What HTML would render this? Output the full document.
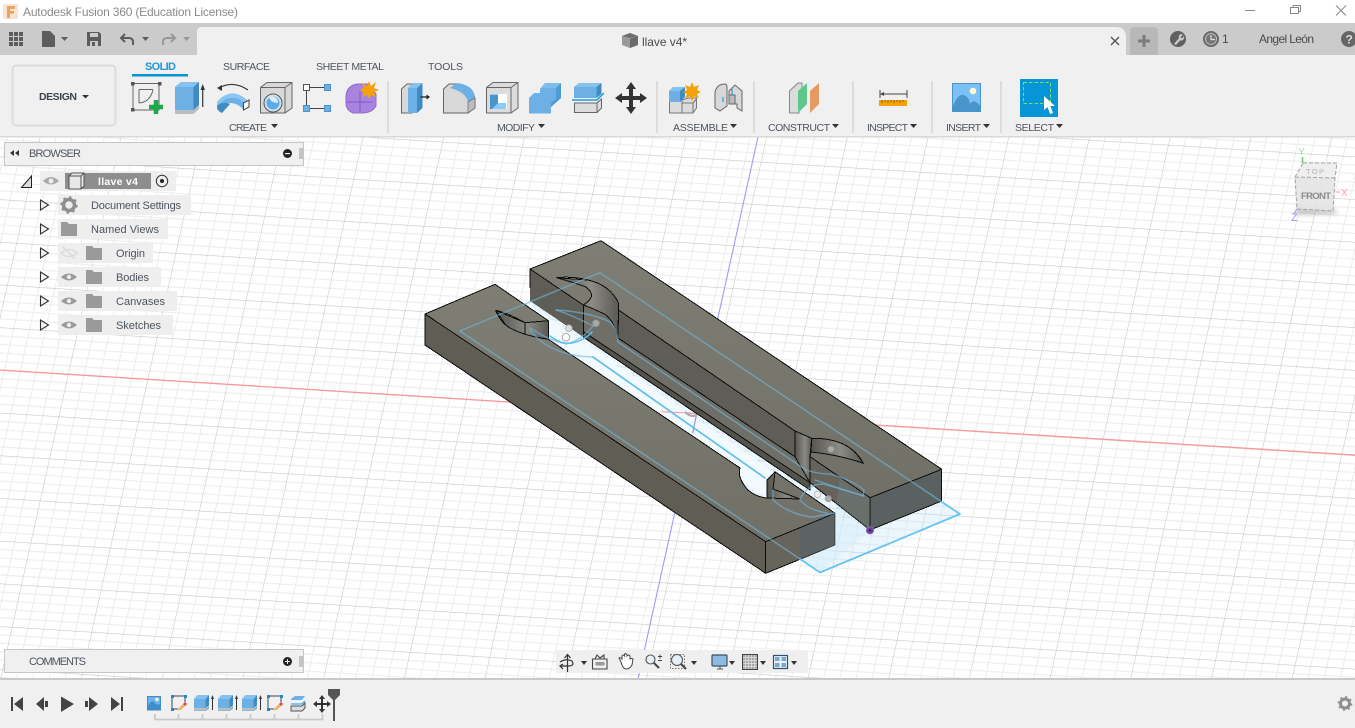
<!DOCTYPE html>
<html><head><meta charset="utf-8"><title>Autodesk Fusion 360</title>
<style>
html,body{margin:0;padding:0;background:#fff;width:1355px;height:728px;overflow:hidden}
svg{position:absolute;left:0;top:0;display:block}
text{font-family:"Liberation Sans",sans-serif;font-size:11px;fill:#4a4a4a}
.lb{font-size:10.5px;fill:#4d5560}
.br{font-size:11px;fill:#4d5560}
</style></head><body>
<svg width="1355" height="728" viewBox="0 0 1355 728" xmlns="http://www.w3.org/2000/svg">
<defs>
<pattern id="grid" patternUnits="userSpaceOnUse" width="79.6" height="42.1" patternTransform="matrix(1,0.063,-0.222,1,68,374.3)">
<g stroke="#ececec" stroke-width="1" fill="none">
<path d="M15.92,0V42.1M31.84,0V42.1M47.76,0V42.1M63.68,0V42.1M0,8.42H79.6M0,16.84H79.6M0,25.26H79.6M0,33.68H79.6"/>
</g>
<g stroke="#c6c6c6" stroke-width="1.1" fill="none"><path d="M0,0V42.1M0,0H79.6"/></g>
</pattern>
<linearGradient id="top" x1="0" y1="0" x2="0" y2="1"><stop offset="0" stop-color="#7f7e74"/><stop offset="1" stop-color="#717067"/></linearGradient>
<linearGradient id="wall" x1="0" y1="0" x2="1" y2="0"><stop offset="0" stop-color="#55544e"/><stop offset=".55" stop-color="#8d8d86"/><stop offset="1" stop-color="#5a5952"/></linearGradient>
<linearGradient id="wall2" x1="0" y1="0" x2="1" y2="0"><stop offset="0" stop-color="#55544e"/><stop offset=".6" stop-color="#8a8a83"/><stop offset="1" stop-color="#5a5952"/></linearGradient>
<filter id="soft" x="-30%" y="-100%" width="160%" height="300%"><feGaussianBlur stdDeviation="2.5"/></filter>
<g id="ext">
<path d="M0,4L3.500,0H15V13L11.500,16H0Z" fill="#6cb0e6"/><path d="M11.500,4L15,0V13L11.500,16Z" fill="#3f8cc4"/><path d="M0,4L3.500,0H15L11.500,4Z" fill="#86c2f0"/><path d="M0,13H11.500L15,10V12L11.500,15.500H0Z" fill="#bdbdbd"/>
<path d="M18.500,15V2" stroke="#333" fill="none"/><path d="M17,4L18.500,0L20,4Z" fill="#333"/>
</g>
<g id="ske">
<path d="M1,1H14M1,1V14M1,14H7M14,1V7" stroke="#444" fill="none"/><rect x="0" y="0" width="3" height="3" fill="#1e87d6"/><rect x="13" y="0" width="3" height="3" fill="#1e87d6"/><rect x="0" y="13" width="3" height="3" fill="#1e87d6"/>
<path d="M8,13L12,9L14,11L10,15L7,15.500Z" fill="#e8b26a"/><path d="M12,9L14,7L16,9L14,11Z" fill="#e04040"/>
</g>
</defs>

<!-- viewport -->
<rect x="0" y="137" width="1355" height="543" fill="#fff"/>
<rect x="0" y="137" width="1355" height="543" fill="url(#grid)"/>
<path d="M0,370L1355,455" stroke="#ff9494" stroke-width="1.2"/>
<path d="M758,137L638,679" stroke="#9d9df2" stroke-width="1.1"/>

<!-- sketch plane floor -->
<path d="M460,331L600,272.700L960,514L820,572.500Z" fill="#bfe4fa" fill-opacity=".3"/>
<path d="M527,303L800,490L770,500L545,345Z" fill="#f3fafe" fill-opacity=".85"/>
<path d="M661.700,411.700L696.700,413.300L692.700,433" fill="none" stroke="#ff9494"/>
<path d="M696.700,413.300L692.700,433" stroke="#8d8df0" fill="none"/>
<path d="M685,412Q691,418 697,415" fill="none" stroke="#aaa" stroke-width="2"/>

<!-- solids -->
<g shape-rendering="crispEdges" stroke="#0c0c0c" stroke-width="1" stroke-linejoin="round">
<!-- right block -->
<path d="M530,269L583.300,305L583.300,337L530,301Z" fill="#5f5e56" stroke="none"/>
<path d="M530,269V288" fill="none"/>
<path d="M583.300,305L810,456.700V490L583.300,337Z" fill="#54534c"/>
<path d="M583.300,305L591.700,308L610,313L618,338L795,456.700L810,467V482.700L583.300,331.700Z" fill="#706f67"/>
<path d="M618.500,310L795,431L795,456.700L618,338Z" fill="#5f5e56"/>
<path d="M556.700,277.700L588,280Q610,285 618.500,303L618,338Q613,316 600,312Q592,308 583.300,305L586,287Z" fill="url(#wall)"/>
<path d="M795,431L811.700,438.300L810,456.700V482.700L795,456.700Z" fill="url(#wall2)"/>
<path d="M811.700,438.300Q847,436 863.300,463.300L811,452Z" fill="url(#wall)"/>
<path d="M810,456.700L870,497.700V530L810,482.700Z" fill="#65635b"/>
<path d="M870,497.700L941.700,469.300V501L870,530Z" fill="#5a6261"/>
<path d="M530,269L601,240.700L941.700,469.300L870,497.700L810,456.700L811,452Q840,455 863.300,463.300Q850,438 811.700,438.300L795,431L618.500,310V303Q610,285 588,280Q572,276 556.700,277.700Q575,283 586,287Q592,292 591.700,296Q590,301 583.300,305Z" fill="url(#top)"/>
<path d="M583.300,305V331.700" fill="none"/>
<!-- left block -->
<path d="M425,314L765.700,541.700V573.300L425,345Z" fill="#5f5d54"/>
<path d="M765.700,541.700L835,513.300V545L765.700,573.300Z" fill="#67645b"/>
<path d="M495.700,310.300L525,322.700L548.300,320.700V339.300L525.300,335L506.700,326.700Z" fill="url(#wall2)"/>
<path d="M525,322.700V335" fill="none"/>
<path d="M767,480L775,471.700L773,489L800,499L767,498Z" fill="url(#wall2)"/>
<path d="M425,314L495,284.300L548.300,320.700L525,322.700Q508,313 495.700,310.300Q500,322 510,328Q525,336 548.300,339.300L740,468Q737,478 748,490Q756,497 767,498L800,499L773,489L775,471.700L835,513.300L765.700,541.700Z" fill="url(#top)"/>
</g>
<!-- tinted zones -->
<path d="M800,529L835,513.300V545L800,559.500Z" fill="#55616a" fill-opacity=".55"/>
<path d="M835,513.300L870,530L870,498L840,477Z" fill="#8fc3dc" fill-opacity=".12"/>
<path d="M835,514L870,531L820,572L800,560L835,545Z" fill="#d6eefb" fill-opacity=".5"/>

<!-- sketch lines -->
<g fill="none" stroke-linecap="round" stroke-linejoin="round">
<g stroke="#6fb4dc" stroke-opacity=".66" stroke-width="1.4">
<path d="M460,331L600,272.700L942,502"/>
<path d="M460,331L800,559"/>
<path d="M618,342L806,470Q818,474 830,474Q852,480 864,490L863,496L815,480"/>
<path d="M530,330Q550,356 593,357"/>
<path d="M530,328Q548,340 566,344Q582,340 593,326"/>
<path d="M556,310Q590,312 610,322Q618,330 618,342"/>
<path d="M556,310Q572,315 593,326"/>
<path d="M773,490V500Q790,515 813,517L835,513"/>
<path d="M800,499Q808,484 823,484L864,496"/>
<path d="M800,500Q808,510 827,513"/>
</g>
<path d="M593,357L765,478" stroke="#62bfec" stroke-width="1.7"/>
<path d="M550,336Q562,345 572,343Q585,340 592,332" stroke="#62bfec" stroke-width="1.5"/>
<path d="M942,502L960,514L820,572.500L800,559" stroke="#66c4f0" stroke-width="1.8"/>
</g>
<g>
<circle cx="568.700" cy="328.300" r="3.300" fill="#ddd" stroke="#bbb"/>
<circle cx="566" cy="337.300" r="3.800" fill="#fff" stroke="#aaa"/>
<circle cx="596" cy="323.300" r="3.200" fill="#aaa" stroke="#999"/>
<circle cx="817.700" cy="494.300" r="3.300" fill="#eee" stroke="#bbb"/>
<circle cx="828.300" cy="498.700" r="3" fill="#aaa" stroke="#999"/>
<circle cx="831" cy="449.300" r="3" fill="#aaa" stroke="#999"/>
<circle cx="870" cy="530.300" r="3.600" fill="#6a3fa0" stroke="#8a68b8"/>
<circle cx="870" cy="530.300" r="1" fill="#222"/>
</g>

<!-- view cube -->
<path d="M1297,207L1334,209L1338,214L1296,215Z" fill="#999" opacity=".55" filter="url(#soft)"/>
<path d="M1303,163H1337L1335,178L1295,177Z" fill="#ececec" fill-opacity=".85"/>
<path d="M1295,177L1335,178L1333,211L1297,209Z" fill="#e3e3e3" fill-opacity=".85"/>
<path d="M1303,163H1337L1335,178L1333,211L1297,209L1295,177Z M1295,177L1335,178" fill="none" stroke="#a2a2a2" stroke-dasharray="4 2"/>
<text x="1306" y="174" style="font-size:7.500px;fill:#b4b4b4" textLength="18">TOP</text>
<text x="1301" y="199" style="font-size:9.500px;font-weight:bold;fill:#8c8c8c" textLength="30">FRONT</text>
<text x="1298" y="155" style="font-size:10px;fill:#8fe59a">Y</text>
<path d="M1302.500,157V163" stroke="#5ed06a" stroke-width="1.500"/>
<path d="M1336,192H1340" stroke="#ff9a9a"/>
<text x="1341" y="196" style="font-size:10px;fill:#ff9a9a">X</text>
<text x="1291" y="221" style="font-size:11px;fill:#9a9af5">Z</text>
<path d="M1297,209L1294,214" stroke="#9a9af5"/>

<!-- title bar -->
<rect x="0" y="0" width="1355" height="23" fill="#fff"/>
<rect x="3" y="4" width="15" height="15" rx="1" fill="#f8e4d2"/>
<path d="M7,6H15V9H10V11H14V13.500H10V18H7Z" fill="#eda160"/>
<text x="23" y="16" style="font-size:12px;fill:#8a8a8a" textLength="215">Autodesk Fusion 360 (Education License)</text>
<path d="M1245,10.500H1255" stroke="#888"/>
<path d="M1290.500,12.500H1298.500V18.500H1290.500ZM1293,12.500V10.500H1300.500V16.500H1298.500" fill="none" stroke="#888" transform="translate(0,-5)"/>
<path d="M1336,5.500L1346,15.500M1346,5.500L1336,15.500" stroke="#888"/>

<!-- header row -->
<rect x="0" y="23" width="1355" height="32" fill="#cbcbcb"/>
<path d="M197,55V32Q197,27 202,27H1116Q1125,27 1126,36V55Z" fill="#f0f0f0"/>
<g fill="#5d5d5d">
<rect x="9" y="32" width="4" height="4"/><rect x="14" y="32" width="4" height="4"/><rect x="19" y="32" width="4" height="4"/>
<rect x="9" y="37" width="4" height="4"/><rect x="14" y="37" width="4" height="4"/><rect x="19" y="37" width="4" height="4"/>
<rect x="9" y="42" width="4" height="4"/><rect x="14" y="42" width="4" height="4"/><rect x="19" y="42" width="4" height="4"/>
<path d="M42,31H50L55,36V47H42Z"/>
<path d="M61,37H68L64.500,41Z"/>
<path d="M87,32H99L101,34V46H87Z"/>
<path d="M142,37H149L145.500,41Z"/>
</g>
<rect x="90" y="33" width="8" height="4" fill="#cbcbcb"/><rect x="90" y="41" width="8" height="5" fill="#cbcbcb"/><rect x="92" y="42" width="3" height="4" fill="#5d5d5d"/>
<path d="M122,38H129Q133,38 133,42V45M125,34L121,38L125,42" fill="none" stroke="#5d5d5d" stroke-width="2"/>
<path d="M174,38H167Q163,38 163,42V45M171,34L175,38L171,42" fill="none" stroke="#989898" stroke-width="2"/>
<path d="M183,37H190L186.500,41Z" fill="#989898"/>
<path d="M622,36L630,33L638,36V45L630,48L622,45Z" fill="#9a9a9a"/>
<path d="M622,36L630,33L638,36L630,38Z" fill="#6f6f6f"/><path d="M630,39L638,36V45L630,48Z" fill="#6a6a6a"/>
<text x="642" y="46" style="font-size:12px;fill:#4a4a4a" textLength="45">llave v4*</text>
<path d="M1111,37L1119,45M1119,37L1111,45" stroke="#555" stroke-width="1.400"/>
<path d="M1130,32Q1130,27 1135,27H1153Q1158,27 1158,32V55H1130Z" fill="#b8b8b8"/>
<path d="M1144,35V47M1138,41H1150" stroke="#7c7c7c" stroke-width="3"/>
<circle cx="1178" cy="39" r="8" fill="#606060"/>
<path d="M1174,44L1179,38Q1178,35 1181,34L1183,34.500L1180.500,37L1182,38.500L1184,36Q1185,39 1182,40.500L1180,40.500L1176,45Z" fill="#cbcbcb"/>
<circle cx="1211" cy="39" r="7.500" fill="#6a6a6a" stroke="#6a6a6a"/>
<circle cx="1211" cy="39" r="5.500" fill="#777" stroke="#cbcbcb" stroke-width=".8"/>
<path d="M1211,35V39.500H1215" fill="none" stroke="#ddd" stroke-width="1.200"/>
<text x="1222" y="43" style="font-size:12px;fill:#4a4a4a">1</text>
<text x="1259" y="43" style="font-size:12px;fill:#4a4a4a" textLength="55">Angel León</text>
<circle cx="1349" cy="39" r="8" fill="#666"/>
<text x="1345.500" y="43.500" style="font-size:12px;font-weight:bold;fill:#ddd">?</text>

<!-- toolbar -->
<rect x="0" y="55" width="1355" height="81" fill="#f0f0f0"/>
<rect x="197" y="50" width="928" height="6" fill="#f0f0f0"/>
<rect x="0" y="136" width="1355" height="1.500" fill="#d8d8d8"/>
<rect x="12.500" y="65.500" width="103" height="60" rx="4" fill="#f0f0f0" stroke="#dcdcdc" stroke-width="2"/>
<text x="39" y="100" style="font-size:10.500px;font-weight:bold;fill:#3c4650" textLength="38">DESIGN</text>
<path d="M82,95H89L85.500,98.500Z" fill="#333"/>
<text x="145" y="70" style="font-size:11px;font-weight:bold;fill:#1e97dd" textLength="31">SOLID</text>
<rect x="132" y="74" width="56" height="2.500" fill="#0696d7"/>
<text x="223" y="70" class="lb" textLength="47">SURFACE</text>
<text x="316" y="70" class="lb" textLength="68">SHEET METAL</text>
<text x="428" y="70" class="lb" textLength="35">TOOLS</text>
<g fill="#dcdcdc">
<rect x="387" y="81" width="2" height="52"/><rect x="656" y="81" width="2" height="52"/><rect x="753" y="81" width="2" height="52"/><rect x="852" y="81" width="2" height="52"/><rect x="931" y="81" width="2" height="52"/><rect x="1000" y="81" width="2" height="52"/>
</g>
<text x="229" y="131" class="lb" textLength="38">CREATE</text><path d="M271,124H278L274.500,128Z" fill="#333"/>
<text x="497" y="131" class="lb" textLength="38">MODIFY</text><path d="M538,124H545L541.500,128Z" fill="#333"/>
<text x="673" y="131" class="lb" textLength="55">ASSEMBLE</text><path d="M730,124H737L733.500,128Z" fill="#333"/>
<text x="768" y="131" class="lb" textLength="62">CONSTRUCT</text><path d="M832,124H839L835.500,128Z" fill="#333"/>
<text x="867" y="131" class="lb" textLength="41">INSPECT</text><path d="M910,124H917L913.500,128Z" fill="#333"/>
<text x="946" y="131" class="lb" textLength="35">INSERT</text><path d="M983,124H990L986.500,128Z" fill="#333"/>
<text x="1015" y="131" class="lb" textLength="39">SELECT</text><path d="M1056,124H1063L1059.500,128Z" fill="#333"/>

<!-- sketch -->
<path d="M133,83.500H159V110H133Z" fill="none" stroke="#666"/>
<g fill="#555"><rect x="131" y="82" width="3.500" height="3.500"/><rect x="158" y="82" width="3.500" height="3.500"/><rect x="131" y="108" width="3.500" height="3.500"/></g>
<path d="M139,89.500H153M139,89.500V103M139,103Q150,102 153,90" fill="none" stroke="#666"/>
<path d="M156,100V114M149,107H163" stroke="#1fa84a" stroke-width="4.500"/>
<!-- extrude -->
<path d="M175,87L181,82H199V105L193.500,110H175Z" fill="#6cb0e6"/><path d="M193.500,87L199,82V105L193.500,110Z" fill="#3f8cc4"/><path d="M175,87L181,82H199L193.500,87Z" fill="#86c2f0"/>
<path d="M175,110H193.500L199,105V109L193.500,114H175Z" fill="#bdbdbd"/>
<path d="M202.700,107V88" stroke="#333" stroke-width="1.200"/><path d="M200.500,90L202.700,84L205,90Z" fill="#333"/>
<!-- revolve -->
<path d="M219,88Q233,80 248,90" fill="none" stroke="#333" stroke-width="1.200"/><path d="M217,88L222,85L222,91Z" fill="#333"/>
<path d="M217,102Q232,85 249,102L244,110Q231,96 217,110Z" fill="#6cb0e6"/>
<path d="M217,102Q232,85 249,102L246.500,105Q232,90 217,106Z" fill="#8ac6f3"/>
<path d="M217,106Q217,111 222,113L230,104Q222,101 217,106Z" fill="#3f8cc4"/>
<path d="M243.500,103L249,100V107L243.500,110Z" fill="#fff" stroke="#444"/>
<!-- hole -->
<path d="M260.500,87.500L267,82.500H292V108L285,113H260.500Z" fill="#d8d8d8" stroke="#666"/><path d="M260.500,87.500H285V113M285,87.500L292,82.500" fill="none" stroke="#666"/>
<circle cx="273" cy="103" r="9" fill="#cfe2f0" stroke="#555"/><circle cx="273" cy="103" r="6.500" fill="#5eaae4"/><path d="M269,97.500Q271,103 278,103Q278,97 272,96.500Z" fill="#dcebf5"/>
<!-- pattern -->
<path d="M310,87.500H324M306.500,91V105M310,108.500H324" stroke="#444"/>
<rect x="303.500" y="84.500" width="6" height="6" fill="#fff" stroke="#555"/><rect x="324.500" y="84.500" width="6" height="6" fill="#6cb0e6" stroke="#4d93c8"/><rect x="303.500" y="105.500" width="6" height="6" fill="#6cb0e6" stroke="#4d93c8"/><rect x="324.500" y="105.500" width="6" height="6" fill="#6cb0e6" stroke="#4d93c8"/>
<!-- form -->
<path d="M346,96Q347,85 358,84H368L376,94V106Q372,113 362,113H353Q346,110 346,103Z" fill="#a884e0" stroke="#8f6ac8"/>
<path d="M347,102H373M360,90V112" stroke="#8459c4"/>
<path d="M369,81L371,86L376,82L374,88L379,90L374,92L376,97L371,95L369,99L367,95L362,97L364,92L359,90L364,88L362,83L367,86Z" fill="#f5a20a"/>
<!-- press pull -->
<path d="M401.500,113V89L407,84H412V113Z" fill="#d8d8d8" stroke="#666"/>
<path d="M408,88L413,83H422V108L417,113H408Z" fill="#6cb0e6"/><path d="M417,88L422.500,83V108L417,113Z" fill="#3f8cc4"/><path d="M408,88L413,83H422.500L417,88Z" fill="#86c2f0"/>
<path d="M420.500,97H428" stroke="#222" stroke-width="1.300"/><path d="M426.500,94.500L430,97L426.500,99.500Z" fill="#222"/>
<!-- fillet -->
<path d="M443.500,113V89L449,84H456Q474,86 475,100V108L468,113Z" fill="#d8d8d8" stroke="#666"/>
<path d="M457,83Q474,85 475,98L468,102Q466,92 450,88Z" fill="#6cb0e6"/>
<path d="M468,102V113L475,108V98Z" fill="#bcbcbc" stroke="#666" stroke-width=".7"/>
<!-- shell -->
<path d="M486.500,87.500L493,82.500H518V108L511,113H486.500Z" fill="#dcdcdc" stroke="#666"/><path d="M486.500,87.500H511V113M511,87.500L518,82.500" fill="none" stroke="#666"/>
<rect x="490" y="94" width="17" height="15" fill="#fff"/>
<path d="M490,94.500H498V103H506V109H490Z" fill="#4a94cc"/><path d="M498,103H506V109H492Z" fill="#8ccbf5"/>
<!-- combine -->
<path d="M529,98L534,93H540V89L545,83H561V98L551,107V113.500H529Z" fill="#6cb0e6"/>
<path d="M540,89L545,83H561L556,88H541Z" fill="#7fbdee"/>
<path d="M556,88L561,83V98L551,107V103L556,99Z" fill="#4f9bd4"/>
<!-- split -->
<path d="M574,87L579,83H601.500V94L596.500,98H574Z" fill="#6cb0e6"/><path d="M574,87L579,83H601.500L596.500,87Z" fill="#86c2f0"/><path d="M596.500,87L601.500,83V94L596.500,98Z" fill="#3f8cc4"/>
<path d="M572,100H597L604,93" fill="none" stroke="#1b9be4" stroke-width="1.500"/>
<path d="M574.500,103H597L601.500,99V108L597,112.500H574.500Z" fill="#dcdcdc" stroke="#666"/><path d="M597,103V112.500" stroke="#666"/>
<!-- move -->
<path d="M631,82L636,89H633V96H640V93L647,98L640,103V100H633V107H636L631,114L626,107H629V100H622V103L615,98L622,93V96H629V89H626Z" fill="#333"/>
<!-- assemble -->
<path d="M669.500,99H682V113H669.500ZM682,100L688,98H696.500V108L693,113H682Z" fill="#dcdcdc" stroke="#777"/><path d="M682,103H693V113M693,103L696.500,99" fill="none" stroke="#777"/>
<path d="M669,91L673,87H685V97L680,102H669Z" fill="#6cb0e6"/><path d="M669,91L673,87H685L680,91Z" fill="#86c2f0"/><path d="M680,91L685,87V97L680,102Z" fill="#3f8cc4"/>
<path d="M692,82L694,87L699,85L697,90L701,92L697,94L699,98L694,96.500L692,101L690,96.500L685,98L687,94L683,92L687,90L685,85L690,87Z" fill="#f5a20a"/>
<path d="M715,92Q717,84 725,84Q727,84 727,88V106L720,111L715,108Z" fill="#d8d8d8" stroke="#666"/>
<path d="M729,91L735,85L742,91V111L737,108V104H729Z" fill="#d8d8d8" stroke="#666"/>
<path d="M729,95H735V104H729Z" fill="#bbb" stroke="#666"/>
<path d="M723,97V102M732,89V95" stroke="#1b9be4" stroke-width="1.200"/>
<!-- construct -->
<path d="M789.500,113V91L798,83H802V91H799V113Z" fill="#dcdcdc" stroke="#888"/>
<path d="M798,91L807,83V104L798,113Z" fill="#5cc98a"/>
<path d="M810,91L819,83V104L810,113Z" fill="#e49a62"/>
<!-- inspect -->
<path d="M880,90V98M880,94H907" stroke="#444"/>
<path d="M880,94L884,92V96Z" fill="#444"/>
<path d="M884,94H907M907,90V98" stroke="#444"/>
<rect x="879" y="100" width="28" height="6" fill="#f5a20a"/>
<path d="M882,100V103M885,100V102M888,100V103M891,100V102M894,100V103M897,100V102M900,100V103M903,100V102" stroke="#7a5000" stroke-width=".8"/>
<!-- insert -->
<rect x="952.500" y="83.500" width="28" height="28" fill="#7cc1f5" stroke="#4a94cc"/>
<path d="M953,106Q958,94 963,95Q969,96 970,104Q974,98 980,106V111H953Z" fill="#4a94cc"/>
<circle cx="973" cy="91" r="3.300" fill="#fff8d0"/>
<!-- select -->
<rect x="1020" y="79" width="38" height="38" fill="#0696d7"/>
<rect x="1023.500" y="82.500" width="27" height="21" fill="none" stroke="#7fe060" stroke-dasharray="3.500 2"/>
<path d="M1044,96L1044,110L1047.500,107L1050,114L1053,113L1050.500,106L1055,106Z" fill="#fff"/>

<!-- browser -->
<rect x="4.500" y="142.500" width="299" height="23" fill="#f0f0f0" stroke="#c6c6c6"/>
<path d="M10,153L14,150V156ZM15,153L19,150V156Z" fill="#333"/>
<text x="29" y="157" class="br" textLength="52">BROWSER</text>
<circle cx="287.500" cy="153.500" r="4.500" fill="#222"/><rect x="285" y="153" width="5" height="1.200" fill="#eee"/>
<path d="M300,148V159M302,148V159" stroke="#999"/>
<path d="M21.500,187.500L31.500,176V187.500Z" fill="#ddd" stroke="#222"/>
<rect x="40" y="171" width="136" height="20" fill="#eeeeee"/>
<path d="M43,181Q51,173 59,181Q51,188 43,181Z" fill="#aaa"/><circle cx="51" cy="181" r="2.500" fill="#eee"/>
<rect x="65" y="173" width="86" height="16" fill="#8e8e8e"/>
<path d="M69,176L72,173H84V186L81,189H69Z" fill="#e8e8e8" stroke="#555"/><path d="M69,176H81V189M81,176L84,173" fill="none" stroke="#555"/>
<text x="98" y="185" style="font-size:10.500px;font-weight:bold;fill:#fff" textLength="40">llave v4</text>
<circle cx="162" cy="181" r="5.700" fill="#eee" stroke="#333"/><circle cx="162" cy="181" r="2" fill="#222"/>

<g fill="#eeeeee">
<rect x="58" y="195" width="133" height="20"/><rect x="58" y="219" width="110" height="20"/><rect x="58" y="243" width="95" height="20"/><rect x="58" y="267" width="103" height="20"/><rect x="58" y="291" width="119" height="20"/><rect x="58" y="315" width="115" height="20"/>
</g>
<g fill="#f2f2f2" stroke="#333" stroke-width="1.100">
<path d="M40.500,200V210L48.500,205Z"/><path d="M40.500,224V234L48.500,229Z"/><path d="M40.500,248V258L48.500,253Z"/><path d="M40.500,272V282L48.500,277Z"/><path d="M40.500,296V306L48.500,301Z"/><path d="M40.500,320V330L48.500,325Z"/>
</g>
<circle cx="69" cy="205" r="5.500" fill="none" stroke="#8e8e8e" stroke-width="3.500"/>
<circle cx="69" cy="205" r="7.700" fill="none" stroke="#8e8e8e" stroke-width="2" stroke-dasharray="2.500 3.500"/>
<g fill="#9a9a9a">
<path d="M61,222H67L69,224H77V236H61Z"/>
<path d="M86,246H92L94,248H102V260H86Z"/><path d="M86,270H92L94,272H102V284H86Z"/><path d="M86,294H92L94,296H102V308H86Z"/><path d="M86,318H92L94,320H102V332H86Z"/>
<path d="M61,277Q69,270 77,277Q69,284 61,277Z"/><path d="M61,301Q69,294 77,301Q69,308 61,301Z"/><path d="M61,325Q69,318 77,325Q69,332 61,325Z"/>
</g>
<g fill="#eee"><circle cx="69" cy="277" r="2.200"/><circle cx="69" cy="301" r="2.200"/><circle cx="69" cy="325" r="2.200"/></g>
<path d="M61,253Q69,246 77,253Q69,260 61,253ZM63,247L75,259" fill="none" stroke="#dcdcdc" stroke-width="1.500"/>
<text x="91" y="209" class="br" textLength="90">Document Settings</text>
<text x="91" y="233" class="br" textLength="68">Named Views</text>
<text x="116" y="257" class="br" textLength="29">Origin</text>
<text x="116" y="281" class="br" textLength="33">Bodies</text>
<text x="116" y="305" class="br" textLength="49">Canvases</text>
<text x="116" y="329" class="br" textLength="45">Sketches</text>

<!-- comments -->
<rect x="4.500" y="649.500" width="299" height="23" fill="#f0f0f0" stroke="#c6c6c6"/>
<text x="29" y="665" class="br" textLength="57">COMMENTS</text>
<circle cx="287.500" cy="661.500" r="4.500" fill="#222"/><path d="M285,661.500H290M287.500,659V664" stroke="#eee"/>
<path d="M300,656V667M302,656V667" stroke="#999"/>

<!-- nav bar -->
<rect x="556" y="650" width="252" height="23" fill="#efefef"/>
<g fill="#333">
<path d="M581,661H587L584,665ZM691,661H697L694,665ZM729,661H735L732,665ZM760,661H766L763,665ZM791,661H797L794,665Z"/>
</g>
<path d="M567.500,655V672M564.500,658L567.500,654.500L570.500,658M560,662Q566,658 572,661Q575,666 568,666H561M563,664L560,666L563,669" fill="none" stroke="#333" stroke-width="1.200"/>
<path d="M592.500,659H607V669H592.500ZM595,659L597,655L600,658L604,655V659" fill="none" stroke="#444" stroke-width="1.100"/><rect x="595.500" y="662" width="9" height="3.500" fill="#999"/>
<path d="M621,662L619,658Q620,657 622,659V656Q623,654 624.500,656V654Q626,653 627,655V656Q629,654 630,656V659Q632,658 633,659L632,665Q630,669 626,669Q623,669 621,662Z" fill="#fff" stroke="#444"/>
<circle cx="650.500" cy="659.500" r="4.500" fill="#e7f0f8" stroke="#555" stroke-width="1.100"/><path d="M654,663L659,668" stroke="#444" stroke-width="2"/>
<path d="M658,656.500H662M660,654.500V658.500M658,660.500H662" stroke="#444" stroke-width=".9"/>
<rect x="670.500" y="654.500" width="14" height="14" fill="none" stroke="#777" stroke-dasharray="1.500 1.500"/>
<circle cx="677" cy="660" r="5.500" fill="#e7f0f8" stroke="#555" stroke-width="1.100"/><path d="M681,664L686,669" stroke="#444" stroke-width="2"/>
<rect x="712" y="655" width="15" height="11" rx="1" fill="#8eb9e0" stroke="#3f4f63" stroke-width="1.200"/><path d="M717,669H723M720,666V669" stroke="#555"/>
<rect x="742.500" y="654.500" width="15" height="15" fill="#a8a8a8" stroke="#444"/><path d="M745.500,655V669M748.500,655V669M751.500,655V669M754.500,655V669M743,657.500H757M743,660.500H757M743,663.500H757M743,666.500H757" stroke="#e4e4e4" stroke-width=".7"/>
<rect x="773.500" y="655.500" width="14" height="13" fill="#eaf2f8" stroke="#2f4f73" stroke-width="1.200"/>
<g fill="#78a7d2"><rect x="775" y="657" width="4.500" height="4"/><rect x="781.500" y="657" width="4.500" height="4"/><rect x="775" y="663" width="4.500" height="4"/><rect x="781.500" y="663" width="4.500" height="4"/></g>

<!-- timeline -->
<rect x="0" y="679" width="1355" height="49" fill="#f0f0f0"/>
<rect x="0" y="678" width="1355" height="2" fill="#c9c9c9"/>
<g fill="#444">
<path d="M11,697H13V711H11ZM23,697V711L14,704Z"/>
<path d="M36,704L44,697V711ZM45,701H48V707H45Z"/>
<path d="M61,696.500V712L74,704Z"/>
<path d="M85,701H88V707H85ZM89,697V711L98,704Z"/>
<path d="M111,697V711L120,704ZM121,697H123V711H121Z"/>
</g>
<rect x="147.500" y="696.500" width="13" height="13.500" fill="#6eb4ec" stroke="#3e8cc8"/>
<path d="M148,706Q151,700 154,702Q156,706 160,704V710H148Z" fill="#3e8cc8"/><circle cx="157" cy="699.500" r="1.700" fill="#fff6c8"/>
<use href="#ske" x="171" y="695"/>
<use href="#ext" x="194" y="695"/>
<use href="#ext" x="218" y="695"/>
<use href="#ext" x="242" y="695"/>
<use href="#ske" x="267" y="695"/>
<path d="M291,699L295,696H305L302,700H291Z" fill="#6cb0e6"/><path d="M291,704H302L305,701" fill="none" stroke="#1b9be4"/><path d="M291,706H302L305,703V708L302,711H291Z" fill="#dcdcdc" stroke="#555"/>
<path d="M322,695L325,699H323V703H327V701L331,704L327,707V705H323V709H325L322,713L319,709H321V705H317V707L313,704L317,701V703H321V699H319Z" fill="#333"/>
<path d="M155,714V719.500H322.500V714M178.500,714V719M202.500,714V719M226.500,714V719M250.500,714V719M274.500,714V719M298.500,714V719" fill="none" stroke="#c8c8c8" stroke-width="1.800"/>
<path d="M328,689H340V695L335,700L333,700L328,695Z" fill="#555"/><rect x="333" y="698" width="2" height="23" fill="#555"/>
<circle cx="1345" cy="703.500" r="4.500" fill="none" stroke="#8e8e8e" stroke-width="3"/>
<circle cx="1345" cy="703.500" r="6.500" fill="none" stroke="#8e8e8e" stroke-width="1.800" stroke-dasharray="2 3.100"/>
</svg>
</body></html>
